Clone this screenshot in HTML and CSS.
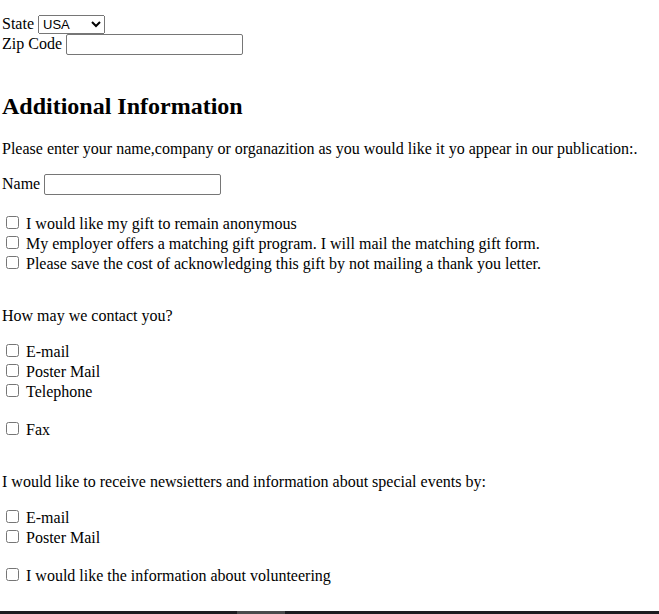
FILE: index.html
```html
<!DOCTYPE html>
<html lang="en">
<head>
<meta charset="utf-8">
<title>Additional Information</title>
<link rel="stylesheet" href="styles.css">
</head>
<body>
<form class="form">
  <div class="row"><label for="state">State</label>
    <select id="state" class="select"><option>USA</option></select></div>
  <div class="row"><label for="zip">Zip Code</label><input id="zip" class="field" type="text"></div>

  <h2 class="heading">Additional Information</h2>
  <p class="text">Please enter your name,company or organazition as you would like it yo appear in our publication:.</p>
  <div class="row name-row"><label for="name">Name</label>
    <input id="name" class="field" type="text"></div>

  <div class="group">
    <label class="check"><input type="checkbox">I would like my gift to remain anonymous</label>
    <label class="check"><input type="checkbox">My employer offers a matching gift program. I will mail the matching gift form.</label>
    <label class="check"><input type="checkbox">Please save the cost of acknowledging this gift by not mailing a thank you letter.</label>
  </div>

  <p class="text question">How may we contact you?</p>
  <div class="group">
    <label class="check"><input type="checkbox">E-mail</label>
    <label class="check"><input type="checkbox">Poster Mail</label>
    <label class="check"><input type="checkbox">Telephone</label>
  </div>
  <div class="group">
    <label class="check"><input type="checkbox">Fax</label>
  </div>

  <p class="text question">I would like to receive newsietters and information about special events by:</p>
  <div class="group">
    <label class="check"><input type="checkbox">E-mail</label>
    <label class="check"><input type="checkbox">Poster Mail</label>
  </div>
  <div class="group">
    <label class="check"><input type="checkbox">I would like the information about volunteering</label>
  </div>
</form>
<footer class="bar"><span class="bar-thumb"></span></footer>
</body>
</html>
```
FILE: styles.css
```css
* { box-sizing: border-box; }
body {
  margin: 0;
  min-height: 100vh;
  display: flex;
  flex-direction: column;
  background: #fff;
  color: #000;
  font: 16px/20px "Liberation Serif", "Times New Roman", serif;
}
.form { flex: 1; padding: 14px 2px 0; }
.row { display: flex; gap: 4px; align-items: center; height: 20px; }
.select {
  width: 67px;
  height: 19px;
  font: 13px "Liberation Sans", Arial, sans-serif;
}
.field {
  width: 177px;
  height: 21px;
  border: 1px solid #767676;
  border-radius: 2px;
}
.heading { margin: 38px 0 0; font-size: 24px; line-height: 28px; }
.text { margin: 19px 0 0; }
.name-row { margin-top: 15px; }
.group { margin-top: 18px; }
.name-row + .group { margin-top: 20px; }
.check { display: flex; align-items: flex-start; gap: 7px; }
.check input { margin: 2px 0 0 4px; width: 13px; height: 13px; }
.question { margin-top: 32px; }
.question + .group { margin-top: 16px; }
.bar { height: 3px; background: #1c1c20; }
.bar-thumb { display: block; width: 48px; height: 3px; margin-left: 36%; background: #4a4a4c; }
```
